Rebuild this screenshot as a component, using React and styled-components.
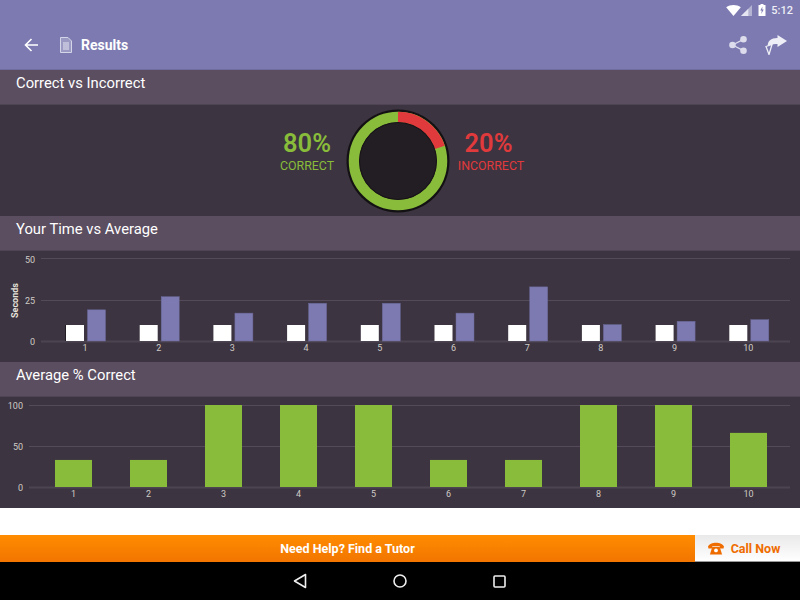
import React from 'react';
import styled, { createGlobalStyle } from 'styled-components';

const GlobalStyle = createGlobalStyle`
  html, body {
    margin: 0;
    padding: 0;
    background: #fff;
    font-family: Roboto, "Liberation Sans", sans-serif;
  }
`;

const Page = styled.div`
  width: 800px;
  height: 600px;
  overflow: hidden;
  display: flex;
  flex-direction: column;
`;

const AppBar = styled.header`
  height: 69px;
  background: #7c7ab0;
  color: #fff;
  display: flex;
  flex-direction: column;
  border-bottom: 1px solid #6f6da0;
`;

const StatusBar = styled.div`
  height: 20px;
  display: flex;
  align-items: center;
  justify-content: flex-end;
  padding-right: 7px;
  font-size: 11px;
  font-weight: 500;
  color: #eeeef6;
`;

const BatteryIcon = styled.svg`
  margin: 0 5px 0 6px;
`;

const Toolbar = styled.div`
  flex: 1;
  display: flex;
  align-items: center;
  padding: 0 13px 0 24px;
`;

const BarTitle = styled.span`
  font-size: 14px;
  font-weight: 700;
  margin-left: 9px;
`;

const PageIcon = styled.svg`
  margin-left: 21px;
`;

const ToolbarEnd = styled.div`
  margin-left: auto;
  display: flex;
  align-items: center;
  gap: 18px;
`;

const SectionHeader = styled.div`
  height: 35px;
  box-sizing: border-box;
  background: #5b4e60;
  color: #fff;
  font-size: 14.8px;
  line-height: 26px;
  padding-left: 16px;
  border-bottom: 1px solid #4f4454;
`;

const Panel = styled.div`
  height: 111px;
  background: #3c3440;
`;

const ScorePanel = styled(Panel)`
  display: flex;
  justify-content: center;
  align-items: center;
  padding-right: 2px;
  box-sizing: border-box;
`;

const Stat = styled.div`
  width: 76px;
  text-align: center;
  color: ${p => p.$color};
  margin: 0 0 20px ${p => p.$gap}px;
`;

const StatValue = styled.div`
  font-size: 25.5px;
  font-weight: 600;
  line-height: 30px;
  padding-right: ${p => p.$nudge || 0}px;
`;

const StatLabel = styled.div`
  font-size: 12.4px;
  line-height: 14px;
  margin-top: 1px;
`;

const DonutWrap = styled.div`
  margin-left: 1px;
  height: 104px;
`;

const ChartSvg = styled.svg`
  display: block;
`;

const AxisText = styled.text`
  font-family: Roboto, "Liberation Sans", sans-serif;
  font-size: 9px;
  fill: #cfcbc6;
`;

const AxisTitle = styled(AxisText)`
  font-weight: 700;
  fill: #e6e2da;
`;

const Spacer = styled.div`
  height: 27px;
  background: #fff;
`;

const HelpBar = styled.div`
  height: 27px;
  display: flex;
  font-weight: 700;
  font-size: 12.5px;
`;

const TutorButton = styled.div`
  width: 695px;
  background: linear-gradient(#ff8c00, #f27500);
  color: #fff;
  display: flex;
  align-items: center;
  justify-content: center;
`;

const CallButton = styled.div`
  flex: 1;
  background: linear-gradient(#e9e9e9, #fff);
  color: #ef6c00;
  display: flex;
  align-items: center;
  justify-content: center;
  gap: 7px;
  padding-right: 7px;
  border-bottom: 1px solid #999;
  box-sizing: border-box;
`;

const NavBar = styled.nav`
  flex: 1;
  background: #000;
  display: flex;
  align-items: center;
  justify-content: center;
  gap: 86px;
  padding-right: 2px;
`;

const times = [19, 27, 17, 23, 23, 17, 33, 10, 12, 13];
const correct = [33, 33, 100, 100, 100, 33, 33, 100, 100, 66];

const Grid = ({ x, lines }) => lines.map(([y, label, textY]) => (
  <g key={label}>
    <rect x={x} y={y - (label === '0' ? 1 : 0.5)} width={790 - x} height={label === '0' ? 2 : 1} fill={label === '0' ? '#4d4452' : '#544a59'} />
    <AxisText x={x - 6} y={textY} textAnchor="end">{label}</AxisText>
  </g>
));

const TimeChart = () => (
  <ChartSvg width="800" height="111">
    <Grid x={41} lines={[[7.5, '50', 12], [49.5, '25', 53], [90.5, '0', 94]]} />
    <AxisTitle transform="translate(18 67) rotate(-90)">Seconds</AxisTitle>
    {times.map((v, i) => {
      const x = 66 + i * 73.7;
      return (
        <g key={i}>
          {i === 0 && <rect x={x - 1} y={74} width={1} height={16} fill="#221d24" />}
          <rect x={x} y={74} width={18} height={16} fill="#fff" />
          <rect x={x + 21.5} y={90 - v * 1.64} width={18} height={v * 1.64} fill="#7c7ab0" stroke="#6b6898" strokeWidth="0.5" />
          <AxisText x={x + 19} y={100} textAnchor="middle">{i + 1}</AxisText>
        </g>
      );
    })}
  </ChartSvg>
);

const CorrectChart = () => (
  <ChartSvg width="800" height="111">
    <Grid x={29} lines={[[8.5, '100', 12], [49.5, '50', 53], [90.5, '0', 94]]} />
    {correct.map((v, i) => {
      const x = 55 + i * 75;
      const h = v * 0.82;
      return (
        <g key={i}>
          <rect x={x} y={90 - h} width={37} height={h} fill="#88bc3a" />
          <AxisText x={x + 18.5} y={100} textAnchor="middle">{i + 1}</AxisText>
        </g>
      );
    })}
  </ChartSvg>
);

const Donut = () => (
  <svg width="104" height="104" viewBox="0 0 104 104">
    <circle cx="52" cy="52" r="51.5" fill="#141114" />
    <circle cx="52" cy="52" r="44" fill="none" stroke="#88bc3a" strokeWidth="10.5" />
    <path d="M52 8 A44 44 0 0 1 93.8 38.4" fill="none" stroke="#e03a3c" strokeWidth="10.5" />
    <circle cx="52" cy="52" r="39" fill="#181418" />
    <circle cx="52" cy="52" r="38" fill="#231e23" />
  </svg>
);

export default function App() {
  return (
    <Page>
      <GlobalStyle />
      <AppBar>
        <StatusBar>
          <svg width="15" height="11" viewBox="0 0 16 12"><path d="M0 2.5C4.500-.8 11.500-.8 16 2.500L8 12z" fill="#fff" /></svg>
          <svg width="11" height="11" viewBox="0 0 12 12"><path d="M12 0v12H0z" fill="#b4b3d2" /><path d="M8 4v8H0z" fill="#e6e6f2" /></svg>
          <BatteryIcon width="8" height="12" viewBox="0 0 7 12"><path d="M2 0h3v1h2v11H0V1h2z" fill="#fff" /><path d="M4 2.500 1.800 6.500h1.500l-.5 3.500 2.400-4.500H3.700z" fill="#7c7ab0" /></BatteryIcon>
          <span>5:12</span>
        </StatusBar>
        <Toolbar>
          <svg width="15" height="14" viewBox="0 0 15 14" fill="none" stroke="#fff" strokeWidth="1.600"><path d="M14 7H1.500M7.500 1 1.500 7l6 6" /></svg>
          <PageIcon width="12" height="16" viewBox="0 0 12 16">
            <path d="M.5.500H8L11.500 4v11.500H.5z" fill="#9a99c4" stroke="#d5d5e8" />
            <path d="M3 6h6M3 8h6M3 10h6M3 12h6" stroke="#e4e4f0" strokeWidth="1" />
          </PageIcon>
          <BarTitle>Results</BarTitle>
          <ToolbarEnd>
            <svg width="18" height="18" viewBox="0 0 18 18" fill="#dcdcec">
              <circle cx="3.500" cy="9" r="3.300" />
              <circle cx="14.500" cy="3.300" r="3.300" />
              <circle cx="14.500" cy="14.700" r="3.300" />
              <path d="M3.500 9 14.500 3.300M3.500 9l11 5.700" stroke="#dcdcec" strokeWidth="1.300" />
            </svg>
            <svg width="22" height="20" viewBox="0 0 22 20">
              <path d="M12.500 0 22 6l-9.500 6V9C8 8.500 5 10 3 12 1.500 6 7 2.800 12.500 3z" fill="#eeeef6" />
              <path d="M1 11.500 7 9.500 4 19.500z" fill="#7c7ab0" stroke="#eeeef6" strokeWidth="1.300" />
            </svg>
          </ToolbarEnd>
        </Toolbar>
      </AppBar>

      <SectionHeader>Correct vs Incorrect</SectionHeader>
      <ScorePanel>
        <Stat $color="#88bc3a" $gap={0}>
          <StatValue>80%</StatValue>
          <StatLabel>CORRECT</StatLabel>
        </Stat>
        <DonutWrap><Donut /></DonutWrap>
        <Stat $color="#e03a3c" $gap={3}>
          <StatValue $nudge={5}>20%</StatValue>
          <StatLabel>INCORRECT</StatLabel>
        </Stat>
      </ScorePanel>

      <SectionHeader>Your Time vs Average</SectionHeader>
      <Panel><TimeChart /></Panel>

      <SectionHeader>Average % Correct</SectionHeader>
      <Panel><CorrectChart /></Panel>

      <Spacer />
      <HelpBar>
        <TutorButton>Need Help? Find a Tutor</TutorButton>
        <CallButton>
          <svg width="16" height="13" viewBox="0 0 17 13" fill="#ef6c00">
            <path d="M0 4.500C2-1 15-1 17 4.500L16.500 6.500H12.500V4H4.500v2.500H.5z" />
            <path d="M4.500 5h8L15 13H2z" />
            <circle cx="8.500" cy="8.500" r="2" fill="#fff" />
          </svg>
          Call Now
        </CallButton>
      </HelpBar>
      <NavBar>
        <svg width="14" height="16" viewBox="0 0 14 16" fill="none" stroke="#eee" strokeWidth="1.600"><path d="M12.500 1.500v13L1.500 8z" strokeLinejoin="round" /></svg>
        <svg width="14" height="14" viewBox="0 0 14 14" fill="none" stroke="#eee" strokeWidth="1.600"><circle cx="7" cy="7" r="6" /></svg>
        <svg width="13" height="13" viewBox="0 0 13 13" fill="none" stroke="#eee" strokeWidth="1.600"><rect x="1" y="1" width="11" height="11" rx="1" /></svg>
      </NavBar>
    </Page>
  );
}
